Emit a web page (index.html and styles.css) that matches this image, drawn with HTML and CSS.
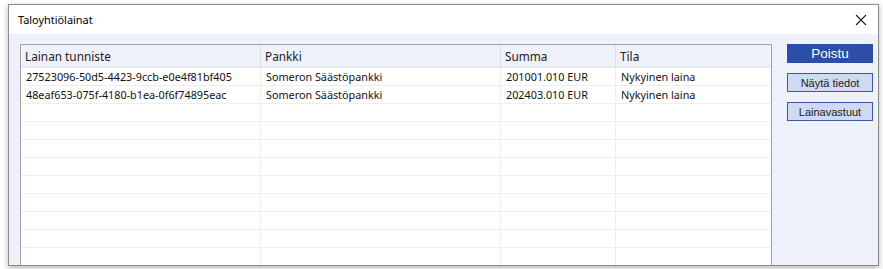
FILE: index.html
```html
<!DOCTYPE html>
<html lang="fi">
<head>
    <meta charset="UTF-8">
    <meta name="viewport" content="width=device-width, initial-scale=1.0">
    <title>Taloyhtiölainat</title>
    <link rel="stylesheet" href="styles.css">
</head>
<body>
    <div class="window">
        <div class="titlebar">
            <span class="title">Taloyhtiölainat</span>
            <svg class="close" width="12" height="12" viewBox="0 0 12 12">
                <path d="M1 1 L11 11 M11 1 L1 11" stroke="#222" stroke-width="1.1" fill="none"/>
            </svg>
        </div>
        <div class="client">
            <div class="grid">
                <table>
                    <thead>
                        <tr>
                            <th class="c1">Lainan tunniste</th>
                            <th class="c2">Pankki</th>
                            <th class="c3">Summa</th>
                            <th class="c4">Tila</th>
                        </tr>
                    </thead>
                    <tbody>
                        <tr>
                            <td>27523096-50d5-4423-9ccb-e0e4f81bf405</td>
                            <td>Someron Säästöpankki</td>
                            <td>201001.010 EUR</td>
                            <td>Nykyinen laina</td>
                        </tr>
                        <tr>
                            <td>48eaf653-075f-4180-b1ea-0f6f74895eac</td>
                            <td>Someron Säästöpankki</td>
                            <td>202403.010 EUR</td>
                            <td>Nykyinen laina</td>
                        </tr>
                        <tr><td></td><td></td><td></td><td></td></tr>
                        <tr><td></td><td></td><td></td><td></td></tr>
                        <tr><td></td><td></td><td></td><td></td></tr>
                        <tr><td></td><td></td><td></td><td></td></tr>
                        <tr><td></td><td></td><td></td><td></td></tr>
                        <tr><td></td><td></td><td></td><td></td></tr>
                        <tr><td></td><td></td><td></td><td></td></tr>
                        <tr><td></td><td></td><td></td><td></td></tr>
                        <tr><td></td><td></td><td></td><td></td></tr>
                        <tr><td></td><td></td><td></td><td></td></tr>
                    </tbody>
                </table>
            </div>
            <div class="buttons">
                <button class="btn primary">Poistu</button>
                <button class="btn">Näytä tiedot</button>
                <button class="btn">Lainavastuut</button>
            </div>
        </div>
    </div>
</body>
</html>
```

FILE: styles.css
```css
body {
    margin: 0;
    background: #ffffff;
    font-family: "Noto Sans", "DejaVu Sans", sans-serif;
    height: 269px;
    overflow: hidden;
}

.window {
    margin: 4px 0 0 8px;
    width: 869px;
    height: 260px;
    border: 1px solid #8c8c8c;
    background: #eef1f9;
    box-shadow: 0 2px 6px rgba(0, 0, 0, 0.3);
    display: flex;
    flex-direction: column;
    overflow: hidden;
}

.titlebar {
    height: 29px;
    background: #ffffff;
    display: flex;
    align-items: center;
    justify-content: space-between;
    padding: 0 9px 0 9px;
    flex-shrink: 0;
}

.title {
    font-size: 10.9px;
    color: #000;
}

.close {
    margin-right: 2px;
}

.client {
    flex: 1;
    display: flex;
    gap: 15px;
    padding: 10px 5px 0 11px;
    overflow: hidden;
}

.grid {
    width: 750px;
    border: 1px solid #a0a0a0;
    border-bottom: none;
    background: #ffffff;
    align-self: flex-start;
}

table {
    border-collapse: collapse;
    width: 100%;
    table-layout: fixed;
}

th {
    height: 22px;
    background: #eef1f9;
    font-weight: normal;
    font-size: 11.8px;
    color: #222;
    text-align: left;
    padding: 0 0 0 4px;
    border-right: 1px solid #dcdfe6;
    border-bottom: 1px solid #e4e6ea;
}

th.c1 { width: 235px; }
th.c2 { width: 235px; }
th.c3 { width: 110px; }
th.c4 { border-right: none; }

td {
    height: 17px;
    font-size: 10.8px;
    color: #111;
    padding: 0 0 0 5px;
    border-right: 1px solid #eeeeee;
    border-bottom: 1px solid #eeeeee;
    white-space: nowrap;
    overflow: hidden;
}

td:last-child {
    border-right: none;
}

.buttons {
    display: flex;
    flex-direction: column;
    gap: 10px;
    width: 86px;
}

.btn {
    height: 19px;
    padding: 0;
    border: 1px solid #3a5aa8;
    background: #cfdaf0;
    color: #1a1a1a;
    font-family: "Liberation Sans", Arial, sans-serif;
    font-size: 11px;
    cursor: pointer;
}

.btn.primary {
    background: #2b4ea6;
    border-color: #2b4ea6;
    color: #ffffff;
    font-size: 13.5px;
}
```
